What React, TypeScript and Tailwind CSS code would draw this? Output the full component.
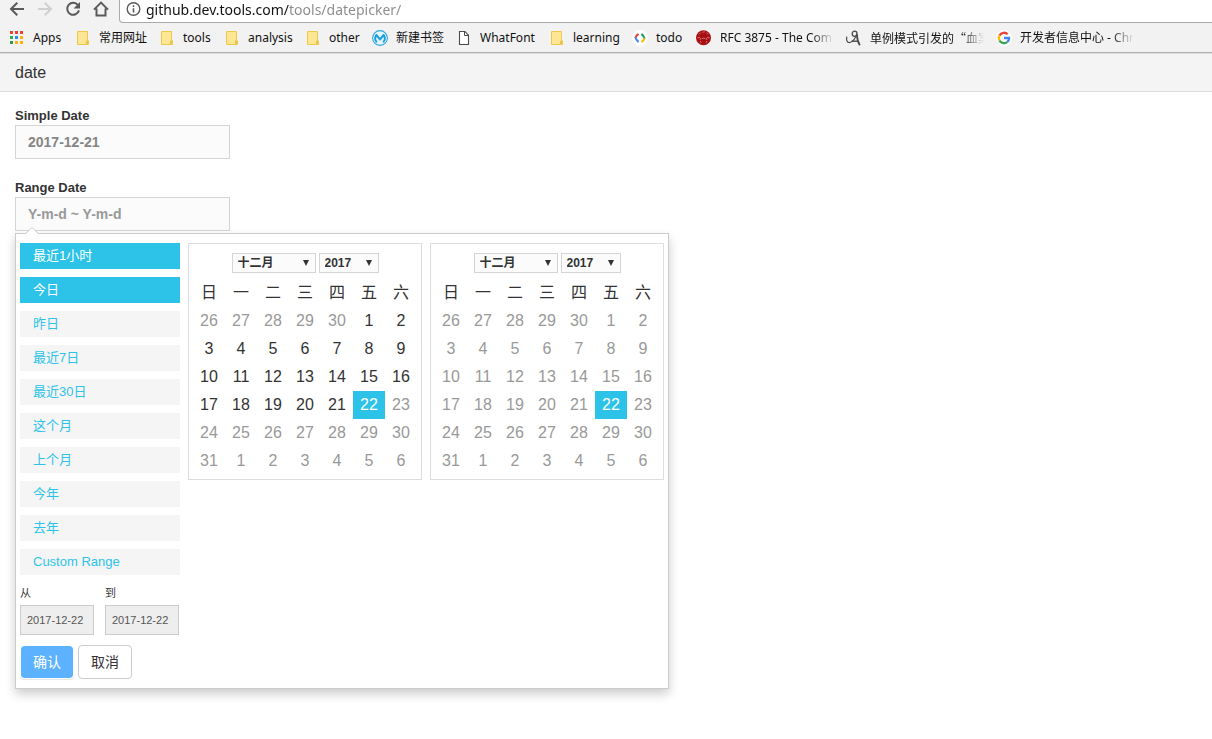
import type { ReactNode } from "react";

const FolderIcon = () => (
  <svg width="16" height="16" viewBox="0 0 16 16" aria-hidden="true">
    <path d="M2.5 1.5h10v9.2h1v3.8h-11z" fill="#ffe694" stroke="#ecc94b" />
    <path d="M11.5 14.5v-3.3c0-.5.9-.5 1 0v3.3" fill="#ffe694" stroke="#e8c34a" />
  </svg>
);

const AppsIcon = () => (
  <svg width="16" height="16" viewBox="0 0 16 16" aria-hidden="true">
    <path d="M1 1h3v3h-3zM6 1h3v3h-3zM11 1h3v3h-3z" fill="#ea4335" />
    <path d="M1 6h3v3h-3z" fill="#34a853" />
    <path d="M6 6h3v3h-3z" fill="#2b8cf0" />
    <path d="M11 6h3v3h-3z" fill="#fbb30b" />
    <path d="M1 11h3v3h-3z" fill="#2e9b50" />
    <path d="M6 11h3v3h-3zM11 11h3v3h-3z" fill="#fbb30b" />
  </svg>
);

const MuleIcon = () => (
  <svg width="16" height="16" viewBox="0 0 16 16" aria-hidden="true">
    <circle cx="8" cy="8" r="7.4" fill="#e6f5fc" stroke="#2ba8e0" strokeWidth="1.1" />
    <path d="M4.9 12.2C2.9 10.8 2.8 7.5 4.3 5L8 9.4 11.7 5c1.5 2.5 1.4 5.8-.6 7.2" fill="none" stroke="#1a9fdc" strokeWidth="2.1" strokeLinejoin="round" />
  </svg>
);

const PageIcon = () => (
  <svg width="16" height="16" viewBox="0 0 16 16" fill="#fff" stroke="#4d4d4d" aria-hidden="true">
    <path d="M3.5 1.5h5.5l3.5 3.8v9.2h-9z" strokeWidth="1.1" />
    <path d="M8.5 1.5v4h4" fill="none" />
  </svg>
);

const CodeIcon = () => (
  <svg width="16" height="16" viewBox="0 0 16 16" fill="none" strokeWidth="2.1" aria-hidden="true">
    <circle cx="8" cy="8" r="8" fill="#fff" />
    <path d="M6.6 4L4.6 5.6Q3.7 6.7 3.5 8" stroke="#ea4335" />
    <path d="M3.5 7.4Q4 10.3 6.6 12" stroke="#4285f4" />
    <path d="M9.4 4Q12 5.7 12.5 8.6" stroke="#1fa463" />
    <path d="M12.5 8.2Q12.2 10.4 9.4 12" stroke="#fbbc05" />
  </svg>
);

const BallIcon = () => (
  <svg width="16" height="16" viewBox="0 0 16 16" fill="none" aria-hidden="true">
    <circle cx="7.5" cy="7.8" r="7.5" fill="#a80f12" />
    <path d="M3 4.5L4.8 2.6M6.4 2.2l2.4-.4M10.4 2.7l1.8 1.7M1.4 7.8l1.8-.6 1.3 1.2-.4 1.6M5.8 8.7l1.8-.5 1.8.5M13.7 7.8l-1.8-.6-1.3 1.2.4 1.6M4.2 11l1 2M10.9 11l-.9 2" stroke="#dd9a9a" strokeWidth=".7" />
  </svg>
);

const ScribbleIcon = () => (
  <svg width="16" height="16" viewBox="0 0 16 16" fill="none" stroke="#4a4a4a" aria-hidden="true">
    <path d="M.8 6.6C.2 10.2 1 12.6 3.4 12.6c3.3 0 6.4-4.8 7.3-8.5" strokeWidth="1.2" />
    <ellipse cx="8.6" cy="3.7" rx="2.4" ry="2.6" strokeWidth="1.3" />
    <path d="M10.8 4C11 8 11.8 12 13.8 15.3" strokeWidth="1.8" />
    <path d="M5.7 11.2h6.5" strokeWidth="1.4" />
  </svg>
);

const GoogleIcon = () => (
  <svg width="16" height="16" viewBox="0 0 16 16" aria-hidden="true">
    <circle cx="8" cy="8" r="8" fill="#fff" />
    <g fill="none" strokeWidth="2.3">
      <path d="M11.7 4.3A5.2 5.2 0 0 0 3.5 5.4" stroke="#ea4335" />
      <path d="M3.5 5.4a5.2 5.2 0 0 0 0 5.2" stroke="#fbbc05" />
      <path d="M3.5 10.6a5.2 5.2 0 0 0 7.7 1.5" stroke="#34a853" />
      <path d="M11.2 12.1A5.2 5.2 0 0 0 13.1 8H8" stroke="#4285f4" />
    </g>
  </svg>
);

type Bookmark = { label: string; icon: ReactNode; width: string; fade?: boolean; cjk?: boolean };

const bookmarks: Bookmark[] = [
  { label: "Apps", icon: <AppsIcon />, width: "w-[66px]" },
  { label: "常用网址", icon: <FolderIcon />, width: "w-[84px]" },
  { label: "tools", icon: <FolderIcon />, width: "w-[65px]" },
  { label: "analysis", icon: <FolderIcon />, width: "w-[81px]" },
  { label: "other", icon: <FolderIcon />, width: "w-[67px]" },
  { label: "新建书签", icon: <MuleIcon />, width: "w-[84px]" },
  { label: "WhatFont", icon: <PageIcon />, width: "w-[93px]" },
  { label: "learning", icon: <FolderIcon />, width: "w-[83px]" },
  { label: "todo", icon: <CodeIcon />, width: "w-[64px]" },
  { label: "RFC 3875 - The Com", icon: <BallIcon />, width: "w-[150px]", fade: true },
  { label: "单例模式引发的“血案", icon: <ScribbleIcon />, width: "w-[150px]", fade: true, cjk: true },
  { label: "开发者信息中心 - Chr", icon: <GoogleIcon />, width: "w-[150px]", fade: true },
];

function NavButton({ label, disabled, children }: { label: string; disabled?: boolean; children: ReactNode }) {
  return (
    <button type="button" aria-label={label} disabled={disabled} className={disabled ? "text-[#d0d0d0]" : "text-[#5a5a5a]"}>
      <svg width="16" height="16" viewBox="0 0 16 16" fill="none" stroke="currentColor" strokeWidth="2" aria-hidden="true">
        {children}
      </svg>
    </button>
  );
}

function BrowserBar() {
  return (
    <div className="border-b border-[#b0b0b0] bg-[#f2f2f2] font-['Noto_Sans','Noto_Sans_CJK_SC',sans-serif]">
      <div className="flex h-[23px]">
        <nav aria-label="History" className="flex shrink-0 items-start gap-3 pt-px pr-[10px] pl-[9px]">
          <NavButton label="Back"><path d="M15 8H2.5M8.3 1.7L2 8l6.3 6.3" /></NavButton>
          <NavButton label="Forward" disabled><path d="M1 8h12.5M7.7 1.7L14 8l-6.3 6.3" /></NavButton>
          <NavButton label="Reload">
            <path d="M13 4.1A6 6 0 1 0 14 9.4" />
            <path d="M15 1v6.4H8.6z" fill="currentColor" stroke="none" />
          </NavButton>
          <NavButton label="Home"><path d="M1 8.6L8 1.6l7 7M3.5 7.5v7h9v-7" /></NavButton>
        </nav>
        <div className="flex min-w-0 grow items-start gap-1 rounded-bl-sm border-b border-l border-[#a9a9a9] bg-white pl-[6px]">
          <svg className="mt-px shrink-0" width="16" height="16" viewBox="0 0 16 16" fill="none" stroke="#5a5a5a" aria-hidden="true">
            <circle cx="7.5" cy="8" r="6.3" strokeWidth="1.4" />
            <path d="M7.5 7.2v4.2M7.5 4.3v1.6" strokeWidth="1.6" />
          </svg>
          <input
            aria-label="Address"
            defaultValue="github.dev.tools.com/tools/datepicker/"
            className="h-[19px] min-w-0 grow bg-[linear-gradient(to_right,#111_143px,#8a8a8a_143px)] bg-clip-text text-sm leading-[19px] text-transparent outline-none"
          />
        </div>
      </div>
      <nav aria-label="Bookmarks" className="flex h-[29px] overflow-hidden pl-[9px]">
        {bookmarks.map((b) => (
          <a key={b.label} href="#" className={`flex shrink-0 items-center gap-2 text-xs whitespace-nowrap text-[#111] ${b.width}`}>
            <span className="shrink-0">{b.icon}</span>
            <span className={`pt-px ${b.cjk ? "font-['Noto_Sans_CJK_SC',sans-serif]" : ""} ${b.fade ? "w-[114px] overflow-hidden [mask-image:linear-gradient(to_right,black_80%,transparent)]" : ""}`}>
              {b.label}
            </span>
          </a>
        ))}
      </nav>
    </div>
  );
}

const weekdays = ["日", "一", "二", "三", "四", "五", "六"];
const weeks = [
  [26, 27, 28, 29, 30, 1, 2],
  [3, 4, 5, 6, 7, 8, 9],
  [10, 11, 12, 13, 14, 15, 16],
  [17, 18, 19, 20, 21, 22, 23],
  [24, 25, 26, 27, 28, 29, 30],
  [31, 1, 2, 3, 4, 5, 6],
];

function Picker({ label, value, width }: { label: string; value: string; width: string }) {
  return (
    <div className={`relative h-5 ${width}`}>
      <select
        aria-label={label}
        className="block h-5 w-full appearance-none border border-[#d5d5d5] bg-[#fbfbfb] pl-[5px] text-xs leading-[18px] font-bold text-[#333]"
      >
        <option>{value}</option>
      </select>
      <svg className="pointer-events-none absolute top-[7px] right-[7px]" width="6" height="6" viewBox="0 0 6 6" aria-hidden="true">
        <path d="M0 0h6L3 6z" fill="#333" />
      </svg>
    </div>
  );
}

function Calendar({ name, firstEnabled }: { name: string; firstEnabled: number }) {
  return (
    <section aria-label={name} className="border border-[#ddd] px-1 pt-[9px] pb-1">
      <div className="flex justify-center gap-[3px] pb-[6px]">
        <Picker label={`${name} month`} value="十二月" width="w-[84px]" />
        <Picker label={`${name} year`} value="2017" width="w-[60px]" />
      </div>
      <table className="table-fixed border-collapse text-center text-base leading-7 text-[#333]">
        <thead>
          <tr>
            {weekdays.map((d) => (
              <th key={d} scope="col" className="h-7 w-8 p-0 font-normal">{d}</th>
            ))}
          </tr>
        </thead>
        <tbody>
          {weeks.map((week, w) => (
            <tr key={w}>
              {week.map((day, i) => {
                const index = w * 7 + i;
                const selected = index === 26;
                const enabled = index >= firstEnabled && index < 26;
                const tone = selected ? "bg-[#2dc3e8] text-white" : enabled ? "text-[#333]" : "text-[#999]";
                return (
                  <td key={i} className="h-7 w-8 p-0">
                    <button type="button" disabled={!selected && !enabled} className={`block h-7 w-8 ${tone}`}>{day}</button>
                  </td>
                );
              })}
            </tr>
          ))}
        </tbody>
      </table>
    </section>
  );
}

const presets = ["最近1小时", "今日", "昨日", "最近7日", "最近30日", "这个月", "上个月", "今年", "去年", "Custom Range"];

function EdgeField({ id, label }: { id: string; label: string }) {
  return (
    <div className="flex w-[74px] flex-col gap-1">
      <label htmlFor={id} className="text-[11px] leading-4 text-[#333]">{label}</label>
      <input id={id} defaultValue="2017-12-22" className="h-[30px] w-full border border-[#ccc] bg-[#eee] px-[6px] text-[11px] text-[#555]" />
    </div>
  );
}

function RangeMenu() {
  return (
    <div className="absolute top-full left-0 mt-[2px] flex gap-2 border border-[#ccc] bg-white px-1 pt-[9px] pb-[9px] shadow-[0_5px_10px_rgba(0,0,0,0.2)]">
      <svg className="absolute -top-[7px] left-[9px]" width="14" height="8" viewBox="0 0 14 8" aria-hidden="true">
        <path d="M0 7.5L7 .5l7 7z" fill="#fff" />
        <path d="M0 6.9L7 .5l7 6.4" fill="none" stroke="#ccc" />
      </svg>
      <div className="w-40">
        <ul className="flex flex-col gap-2">
          {presets.map((p, i) => (
            <li key={p}>
              <button
                type="button"
                className={`block h-[26px] w-full px-[13px] text-left text-[13px] leading-[26px] ${i < 2 ? "bg-[#2dc3e8] text-white" : "bg-[#f5f5f5] text-[#2dc3e8]"}`}
              >
                {p}
              </button>
            </li>
          ))}
        </ul>
        <div className="mt-[10px] flex gap-[11px]">
          <EdgeField id="range-from" label="从" />
          <EdgeField id="range-to" label="到" />
        </div>
        <div className="mt-[10px] flex gap-1">
          <button type="button" className="h-[34px] w-[54px] rounded border border-white bg-[#5db2ff] bg-clip-padding text-sm text-white shadow-[0_1px_1px_rgba(0,0,0,0.1)]">确认</button>
          <button type="button" className="h-[34px] w-[54px] rounded border border-[#ccc] bg-white text-sm text-[#333]">取消</button>
        </div>
      </div>
      <div className="flex items-start gap-2">
        <Calendar name="Start" firstEnabled={5} />
        <Calendar name="End" firstEnabled={26} />
      </div>
    </div>
  );
}

const fieldLabel = "block text-[13px] leading-[18px] font-bold text-[#333]";
const fieldInput = "block h-[34px] w-[215px] border border-[#d5d5d5] bg-[#fbfbfb] px-3 text-sm font-bold";

export default function App() {
  return (
    <div className="min-h-screen bg-white font-['Liberation_Sans','Noto_Sans_CJK_SC',sans-serif]">
      <BrowserBar />
      <header className="border-t border-b border-[#ddd] bg-[#f4f4f4] px-[15px]">
        <h1 className="text-base leading-[37px] text-[#333]">date</h1>
      </header>
      <main className="flex flex-col items-start gap-5 px-[15px] pt-[15px]">
        <div>
          <label htmlFor="simple" className={fieldLabel}>Simple Date</label>
          <input id="simple" defaultValue="2017-12-21" className={`${fieldInput} text-[#858585]`} />
        </div>
        <div className="relative">
          <label htmlFor="range" className={fieldLabel}>Range Date</label>
          <input id="range" placeholder="Y-m-d ~ Y-m-d" className={`${fieldInput} placeholder:text-[#999]`} />
          <RangeMenu />
        </div>
      </main>
    </div>
  );
}
